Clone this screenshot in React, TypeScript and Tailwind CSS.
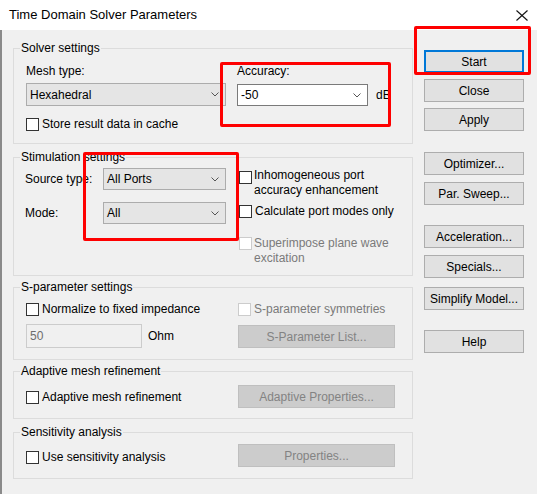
import React from "react";

const font = { fontFamily: '"Liberation Sans", Arial, sans-serif' };

function Chevron() {
  return (
    <svg width="8" height="5" viewBox="0 0 8 5" className="shrink-0">
      <polyline points="0.5,0.5 4,4 7.5,0.5" fill="none" stroke="#555" strokeWidth="1" />
    </svg>
  );
}

function Dropdown({ value, className }: { value: string; className: string }) {
  return (
    <div
      className={`flex shrink-0 items-center justify-between border border-[#acacac] bg-[#e5e5e5] pl-[3px] pr-[6px] text-[12px] text-black ${className}`}
    >
      <span className="whitespace-nowrap">{value}</span>
      <Chevron />
    </div>
  );
}

function Box({ disabled }: { disabled?: boolean }) {
  return (
    <span
      className={`inline-block h-[13px] w-[13px] shrink-0 border bg-white ${
        disabled ? "border-[#cccccc]" : "border-[#333333]"
      }`}
    />
  );
}

function Check({ label, disabled, className = "" }: { label: string; disabled?: boolean; className?: string }) {
  return (
    <div
      className={`flex items-center gap-[3px] whitespace-nowrap leading-[15px] ${
        disabled ? "text-[#7a7a7a]" : "text-black"
      } ${className}`}
    >
      <Box disabled={disabled} />
      <span>{label}</span>
    </div>
  );
}

function Btn({ label, className = "", primary }: { label: string; className?: string; primary?: boolean }) {
  return (
    <div
      className={`flex h-[23px] w-[100px] shrink-0 items-center justify-center bg-[#e1e1e1] text-[12px] text-black ${
        primary ? "border-2 border-[#0078d7]" : "border border-[#adadad]"
      } ${className}`}
    >
      {label}
    </div>
  );
}

function DisBtn({ label }: { label: string }) {
  return (
    <div className="flex h-[23px] w-[157px] shrink-0 items-center justify-center border border-[#bfbfbf] bg-[#cccccc] text-[12px] text-[#838383]">
      {label}
    </div>
  );
}

function Group({ title, className = "", children }: { title: string; className?: string; children: React.ReactNode }) {
  return (
    <div className={`relative w-[400px] shrink-0 border border-[#dcdcdc] ${className}`}>
      <span className="absolute left-[6px] top-[-8px] whitespace-nowrap bg-[#f0f0f0] px-[1px] leading-[15px] text-black">
        {title}
      </span>
      {children}
    </div>
  );
}

export default function App() {
  return (
    <div className="relative h-[494px] w-[537px] overflow-hidden bg-[#f0f0f0] text-[12px]" style={font}>
      {/* Title bar */}
      <div className="flex h-[30px] items-center justify-between bg-white pl-[9px] pr-[9px]">
        <span className="text-[13px] text-black">Time Domain Solver Parameters</span>
        <svg width="12" height="11" viewBox="0 0 12 11">
          <line x1="0.5" y1="0.5" x2="11.5" y2="10.5" stroke="#111" strokeWidth="1.1" />
          <line x1="11.5" y1="0.5" x2="0.5" y2="10.5" stroke="#111" strokeWidth="1.1" />
        </svg>
      </div>

      {/* Body */}
      <div className="flex h-[464px] border-l-2 border-[#8a8a8a] pl-[11px]">
        {/* Left column */}
        <div className="flex w-[400px] shrink-0 flex-col pt-[18px]">
          {/* Solver settings */}
          <Group title="Solver settings" className="h-[96px]">
            <div className="flex pl-[12px] pt-[15px]">
              <div className="flex w-[200px] shrink-0 flex-col">
                <span className="leading-[15px]">Mesh type:</span>
                <Dropdown value="Hexahedral" className="mt-[4px] h-[23px] w-[200px]" />
                <Check label="Store result data in cache" className="mt-[11px]" />
              </div>
              <div className="ml-[11px] flex flex-col">
                <span className="leading-[15px]">Accuracy:</span>
                <div className="mt-[5px] flex items-center">
                  <div className="flex h-[22px] w-[131px] shrink-0 items-center justify-between border border-[#7a7a7a] bg-white pl-[3px] pr-[6px]">
                    <span>-50</span>
                    <Chevron />
                  </div>
                  <span className="ml-[8px]">dB</span>
                </div>
              </div>
            </div>
          </Group>

          {/* Stimulation settings */}
          <Group title="Stimulation settings" className="mt-[13px] h-[119px]">
            <div className="flex items-start pl-[11px] pt-[10px]">
              <div className="grid w-[201px] shrink-0 grid-cols-[78px_123px] grid-rows-[22px_22px] content-start items-center gap-y-[12px] self-start">
                <span className="whitespace-nowrap">Source type:</span>
                <Dropdown value="All Ports" className="h-[22px] w-[123px]" />
                <span className="whitespace-nowrap">Mode:</span>
                <Dropdown value="All" className="h-[22px] w-[123px]" />
              </div>
              <div className="ml-[13px] flex flex-col">
                <div className="flex items-start gap-[2px] leading-[15px]">
                  <span className="mt-[3px]">
                    <Box />
                  </span>
                  <span className="whitespace-nowrap">
                    Inhomogeneous port
                    <br />
                    accuracy enhancement
                  </span>
                </div>
                <Check label="Calculate port modes only" className="mt-[6px]" />
                <div className="mt-[17px] flex items-start gap-[2px] leading-[15px] text-[#7a7a7a]">
                  <span className="mt-[1px]">
                    <Box disabled />
                  </span>
                  <span className="whitespace-nowrap">
                    Superimpose plane wave
                    <br />
                    excitation
                  </span>
                </div>
              </div>
            </div>
          </Group>

          {/* S-parameter settings */}
          <Group title="S-parameter settings" className="mt-[11px] h-[73px]">
            <div className="flex pl-[12px] pt-[14px]">
              <div className="flex w-[212px] shrink-0 flex-col">
                <Check label="Normalize to fixed impedance" />
                <div className="mt-[7px] flex items-center">
                  <div className="flex h-[24px] w-[116px] shrink-0 items-center border border-[#cccccc] bg-[#f0f0f0] pl-[3px] text-[#6d6d6d]">
                    50
                  </div>
                  <span className="ml-[6px]">Ohm</span>
                </div>
              </div>
              <div className="flex flex-col">
                <Check label="S-parameter symmetries" disabled />
                <div className="mt-[8px]">
                  <DisBtn label="S-Parameter List..." />
                </div>
              </div>
            </div>
          </Group>

          {/* Adaptive mesh refinement */}
          <Group title="Adaptive mesh refinement" className="mt-[11px] h-[48px]">
            <div className="flex items-center pl-[12px] pt-[13px]">
              <div className="w-[212px] shrink-0 pt-[1px]">
                <Check label="Adaptive mesh refinement" />
              </div>
              <DisBtn label="Adaptive Properties..." />
            </div>
          </Group>

          {/* Sensitivity analysis */}
          <Group title="Sensitivity analysis" className="mt-[13px] h-[47px]">
            <div className="flex items-center pl-[12px] pt-[11px]">
              <div className="w-[212px] shrink-0 pt-[3px]">
                <Check label="Use sensitivity analysis" />
              </div>
              <DisBtn label="Properties..." />
            </div>
          </Group>
        </div>

        {/* Right column */}
        <div className="ml-[11px] flex flex-col pt-[20px]">
          <Btn label="Start" primary />
          <Btn label="Close" className="mt-[6px]" />
          <Btn label="Apply" className="mt-[6px]" />
          <Btn label="Optimizer..." className="mt-[21px]" />
          <Btn label="Par. Sweep..." className="mt-[7px]" />
          <Btn label="Acceleration..." className="mt-[20px]" />
          <Btn label="Specials..." className="mt-[7px]" />
          <Btn label="Simplify Model..." className="mt-[9px]" />
          <Btn label="Help" className="mt-[20px]" />
        </div>
      </div>

      {/* Red annotation boxes */}
      <div className="pointer-events-none absolute left-[220px] top-[62px] h-[65px] w-[171px] rounded-[2px] border-[3px] border-[#fe0000]" />
      <div className="pointer-events-none absolute left-[414px] top-[26px] h-[49px] w-[117px] rounded-[2px] border-[3px] border-[#fe0000]" />
      <div className="pointer-events-none absolute left-[83px] top-[152px] h-[89px] w-[156px] rounded-[2px] border-[3px] border-[#fe0000]" />
    </div>
  );
}
